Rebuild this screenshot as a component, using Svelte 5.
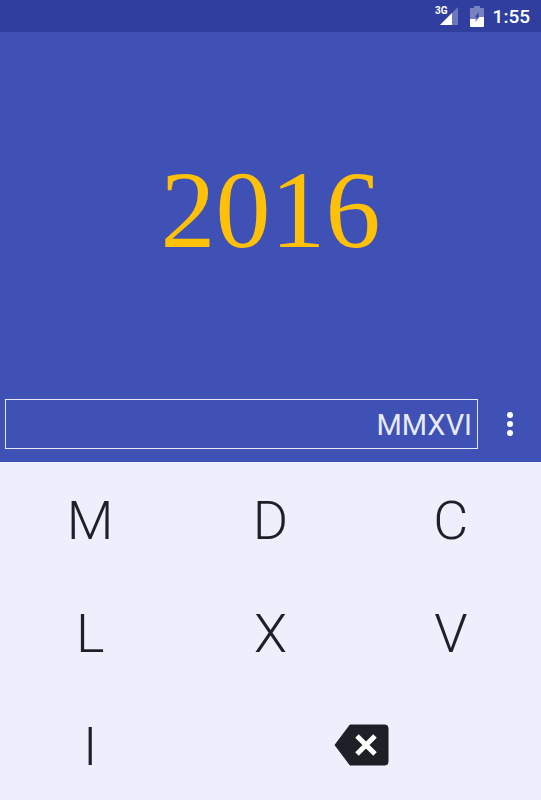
<script>
	const keys = ['M', 'D', 'C', 'L', 'X', 'V', 'I'];
</script>

<main class="page">
	<header class="status">
		<span class="net">3G</span>
		<svg class="signal" width="20" height="20" viewBox="0 0 20 20">
			<path d="M19 1v18H1z" fill="#fff" opacity="0.3" />
			<path d="M13 7v12H1z" fill="#fff" />
		</svg>
		<svg class="battery" width="14" height="21" viewBox="0 0 14 21">
			<path d="M4 2V0h6v2h3a1 1 0 0 1 1 1v17a1 1 0 0 1-1 1H1a1 1 0 0 1-1-1V3a1 1 0 0 1 1-1z" fill="#fff" opacity="0.35" />
			<path d="M0 13h5.500v3l3.500-5h5v9a1 1 0 0 1-1 1H1a1 1 0 0 1-1-1z" fill="#fff" />
			<path d="M8.500 6L5 11.500h2.500V14L9 10.500H8.500z" fill="#303f9f" />
		</svg>
		<span class="clock">1:55</span>
	</header>

	<section class="display">
		<div class="result">2016</div>
		<div class="input-row">
			<div class="field">MMXVI</div>
			<button class="menu" aria-label="More options">
				<i></i><i></i><i></i>
			</button>
		</div>
	</section>

	<section class="pad">
		{#each keys as key}
			<button class="key">{key}</button>
		{/each}
		<button class="key delete" aria-label="Delete">
			<svg width="56" height="42" viewBox="0 0 56 42">
				<path d="M17 1h35a3 3 0 0 1 3 3v34a3 3 0 0 1-3 3H17L2 21z" fill="#1e2028" stroke="#1e2028" stroke-linejoin="round" />
				<path d="M24 12l18 18M42 12L24 30" stroke="#fff" stroke-width="5" fill="none" />
			</svg>
		</button>
	</section>
</main>

<style>
	:global(body) {
		margin: 0;
	}

	.page {
		width: 541px;
		height: 800px;
		display: flex;
		flex-direction: column;
		font-family: Roboto, sans-serif;
		overflow: hidden;
	}

	.status {
		height: 32px;
		flex: none;
		background: #303f9f;
		color: #fff;
		display: flex;
		align-items: center;
		justify-content: flex-end;
		padding-right: 11px;
		box-sizing: border-box;
	}

	.net {
		font-size: 10px;
		font-weight: 700;
		margin-right: -9px;
		margin-bottom: 12px;
	}

	.signal {
		margin-right: 11px;
	}

	.battery {
		margin-right: 9px;
		margin-top: 1px;
	}

	.clock {
		font-size: 19px;
		font-weight: 500;
	}

	.display {
		height: 430px;
		flex: none;
		background: #3f51b5;
		display: flex;
		flex-direction: column;
	}

	.result {
		height: 357px;
		margin-bottom: 10px;
		display: flex;
		align-items: center;
		justify-content: center;
		font-family: "Liberation Serif", serif;
		font-size: 110px;
		color: #ffc107;
	}

	.input-row {
		display: flex;
		align-items: center;
		padding-left: 5px;
	}

	.field {
		flex: none;
		width: 473px;
		height: 50px;
		box-sizing: border-box;
		border: 1px solid #e8eaf6;
		padding: 4px 5px 0 0;
		text-align: right;
		font-size: 29px;
		font-weight: 400;
		line-height: 42px;
		color: #e8eaf6;
	}

	.menu {
		flex: none;
		width: 64px;
		height: 50px;
		padding: 0;
		border: none;
		background: none;
		display: flex;
		flex-direction: column;
		align-items: center;
		justify-content: center;
		gap: 3px;
	}

	.menu i {
		width: 6px;
		height: 6px;
		border-radius: 50%;
		background: #fff;
	}

	.pad {
		flex: 1;
		background: #eeeefc;
		display: grid;
		grid-template-columns: repeat(3, 1fr);
		grid-template-rows: 114px 113px 113px;
	}

	.key {
		border: none;
		background: none;
		padding: 2px 0 0;
		font-family: inherit;
		font-size: 54px;
		font-weight: 300;
		color: #1e2028;
		display: flex;
		align-items: center;
		justify-content: center;
	}

	.delete {
		grid-column: span 2;
		padding: 0 0 2px;
	}
</style>
